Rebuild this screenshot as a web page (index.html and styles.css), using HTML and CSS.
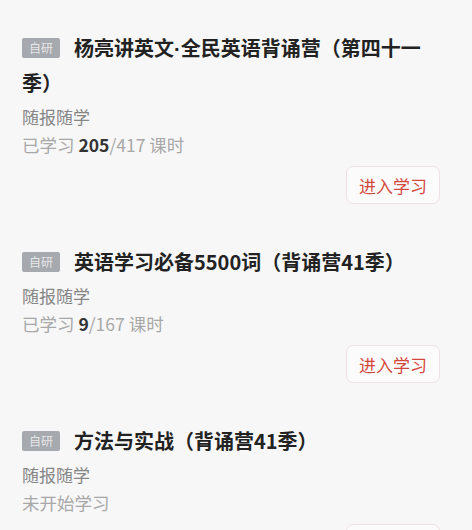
FILE: index.html
```html
<!DOCTYPE html>
<html lang="zh-CN">
<head>
<meta charset="utf-8">
<link rel="stylesheet" href="styles.css">
</head>
<body>
<div class="list">
  <div class="card">
    <div class="title"><span class="badge">自研</span>杨亮讲英文<span class="dot">·</span>全民英语背诵营（第四十一<wbr>季）</div>
    <div class="sub">随报随学</div>
    <div class="progress">已学习 <b>205</b>/417 课时</div>
    <div class="actions"><button class="btn">进入学习</button></div>
  </div>
  <div class="card">
    <div class="title"><span class="badge">自研</span>英语学习必备5500词（背诵营41季）</div>
    <div class="sub">随报随学</div>
    <div class="progress">已学习 <b>9</b>/167 课时</div>
    <div class="actions"><button class="btn">进入学习</button></div>
  </div>
  <div class="card">
    <div class="title"><span class="badge">自研</span>方法与实战（背诵营41季）</div>
    <div class="sub">随报随学</div>
    <div class="progress">未开始学习</div>
    <div class="actions"><button class="btn">进入学习</button></div>
  </div>
</div>
</body>
</html>
```
FILE: styles.css
```css
html, body {
  margin: 0;
  padding: 0;
  background: #f7f7f7;
}
html {
  overflow: hidden;
}
body {
  font-family: "Noto Sans CJK SC", "Noto Sans", sans-serif;
  height: 530px;
  overflow: hidden;
}
.list {
  display: flex;
  flex-direction: column;
  gap: 41px;
  padding-top: 31px;
}
.card {
  padding: 0 22px;
}
.title {
  font-size: 20px;
  line-height: 34px;
  font-weight: 700;
  color: #222;
}
.dot {
  font-family: "Liberation Sans", sans-serif;
}
.badge {
  display: inline-block;
  vertical-align: 3px;
  width: 38px;
  height: 20px;
  line-height: 20px;
  margin-right: 14px;
  border-radius: 2px;
  background: #a6a9ae;
  color: #e6e7e8;
  font-size: 12px;
  font-weight: 400;
  text-align: center;
}
.sub {
  margin-top: 3px;
  font-size: 17px;
  line-height: 28px;
  color: #868686;
}
.progress {
  font-size: 17.5px;
  line-height: 28px;
  color: #a8a8a8;
}
.progress b {
  color: #333;
  font-weight: 700;
}
.actions {
  display: flex;
  justify-content: flex-end;
  margin-top: 7px;
  padding-right: 10px;
}
.btn {
  width: 94px;
  height: 38px;
  border: 1px solid #eee2e2;
  border-radius: 7px;
  background: #fbfbfb;
  color: #d3483d;
  font-family: inherit;
  font-size: 17px;
  padding: 0;
}
```
